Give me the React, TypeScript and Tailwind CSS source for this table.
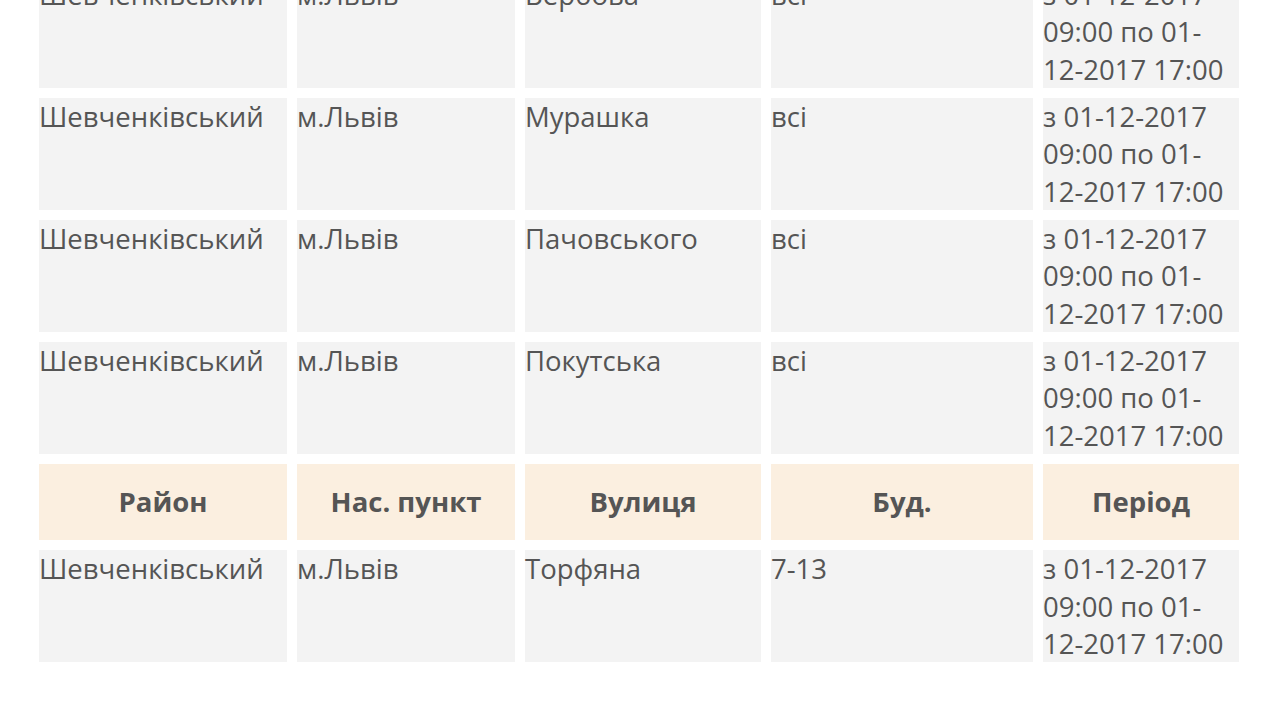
const rows = [
  { street: "Вербова", bud: "всі" },
  { street: "Мурашка", bud: "всі" },
  { street: "Пачовського", bud: "всі" },
  { street: "Покутська", bud: "всі" },
];

const period = "з 01-12-2017 09:00 по 01-12-2017 17:00";

function DataRow({ street, bud }: { street: string; bud: string }) {
  return (
    <tr className="align-top">
      <td className="bg-[#f3f3f3] p-0">Шевченківський</td>
      <td className="bg-[#f3f3f3] p-0">м.Львів</td>
      <td className="bg-[#f3f3f3] p-0">{street}</td>
      <td className="bg-[#f3f3f3] p-0">{bud}</td>
      <td className="bg-[#f3f3f3] p-0">{period}</td>
    </tr>
  );
}

export default function App() {
  return (
    <div className="h-[720px] overflow-hidden bg-white font-['Open_Sans',sans-serif] text-[27.5px] leading-[37.33px] text-[#555]">
      <table className="-mt-[34px] ml-[29px] w-[1220px] table-fixed border-separate border-spacing-[10px]">
        <colgroup>
          <col className="w-[248px]" />
          <col className="w-[218px]" />
          <col className="w-[236px]" />
          <col className="w-[262px]" />
          <col className="w-[196px]" />
        </colgroup>
        <tbody>
          {rows.map((r) => (
            <DataRow key={r.street} {...r} />
          ))}
          <tr className="text-center font-bold">
            {["Район", "Нас. пункт", "Вулиця", "Буд.", "Період"].map((h) => (
              <td key={h} className="bg-[#fbefe0] py-[19.5px]">
                {h}
              </td>
            ))}
          </tr>
          <DataRow street="Торфяна" bud="7-13" />
        </tbody>
      </table>
    </div>
  );
}
